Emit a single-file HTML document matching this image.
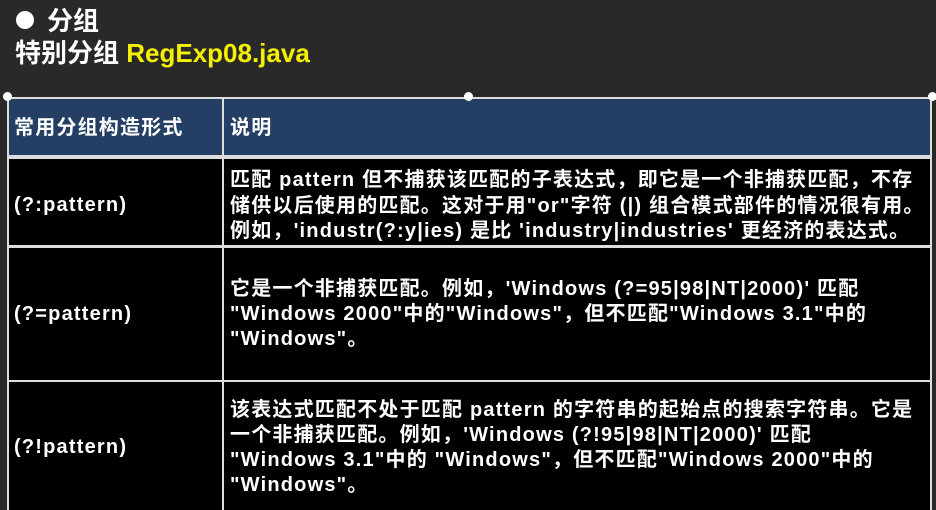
<!DOCTYPE html>
<html><head><meta charset="utf-8"><style>
*{margin:0;padding:0;box-sizing:border-box}
body{width:936px;height:510px;overflow:hidden;background:#292929;font-family:"Liberation Sans","Noto Sans CJK SC",sans-serif;font-weight:bold;color:#fff;position:relative}
.a{position:absolute;white-space:nowrap}
.t{font-size:20px;line-height:25px;letter-spacing:1.2px}
</style></head><body>
<div class="a" style="left:16px;top:11px;width:18px;height:18px;border-radius:50%;background:#fff"></div>
<div class="a" style="left:47px;top:1px;font-size:26px">分组</div>
<div class="a" style="left:15px;top:33px;font-size:26px">特别分组 <span style="color:#f5f000">RegExp08.java</span></div>
<div class="a" style="left:7px;top:97px;width:925px;height:413px;background:#ddd"></div>
<div class="a" style="left:9px;top:99px;width:213px;height:56px;background:#243f63"></div>
<div class="a" style="left:224px;top:99px;width:706px;height:56px;background:#243f63"></div>
<div class="a" style="left:9px;top:159px;width:213px;height:86px;background:#000"></div>
<div class="a" style="left:224px;top:159px;width:706px;height:86px;background:#000"></div>
<div class="a" style="left:9px;top:248px;width:213px;height:132px;background:#000"></div>
<div class="a" style="left:224px;top:248px;width:706px;height:132px;background:#000"></div>
<div class="a" style="left:9px;top:382px;width:213px;height:128px;background:#000"></div>
<div class="a" style="left:224px;top:382px;width:706px;height:128px;background:#000"></div>
<div class="a" style="left:3px;top:92px;width:9px;height:9px;border-radius:50%;background:#fff"></div>
<div class="a" style="left:464px;top:92px;width:9px;height:9px;border-radius:50%;background:#fff"></div>
<div class="a" style="left:928px;top:92px;width:9px;height:9px;border-radius:50%;background:#fff"></div>
<div class="a t" style="left:14px;top:116px">常用分组构造形式</div>
<div class="a t" style="left:230px;top:116px">说明</div>
<div class="a t" style="left:14px;top:193px">(?:pattern)</div>
<div class="a t" style="left:14px;top:302px">(?=pattern)</div>
<div class="a t" style="left:14px;top:435px">(?!pattern)</div>
<div class="a t" style="left:230px;top:168px">匹配 pattern 但不捕获该匹配的子表达式，即它是一个非捕获匹配，不存</div>
<div class="a t" style="left:230px;top:194px">储供以后使用的匹配。这对于用"or"字符 (|) 组合模式部件的情况很有用。</div>
<div class="a t" style="left:230px;top:219px">例如，'industr(?:y|ies) 是比 'industry|industries' 更经济的表达式。</div>
<div class="a t" style="left:230px;top:277px">它是一个非捕获匹配。例如，'Windows (?=95|98|NT|2000)' 匹配</div>
<div class="a t" style="left:230px;top:302px">"Windows 2000"中的"Windows"，但不匹配"Windows 3.1"中的</div>
<div class="a t" style="left:230px;top:327px">"Windows"。</div>
<div class="a t" style="left:230px;top:398px">该表达式匹配不处于匹配 pattern 的字符串的起始点的搜索字符串。它是</div>
<div class="a t" style="left:230px;top:423px">一个非捕获匹配。例如，'Windows (?!95|98|NT|2000)' 匹配</div>
<div class="a t" style="left:230px;top:448px">"Windows 3.1"中的 "Windows"，但不匹配"Windows 2000"中的</div>
<div class="a t" style="left:230px;top:473px">"Windows"。</div>
</body></html>
